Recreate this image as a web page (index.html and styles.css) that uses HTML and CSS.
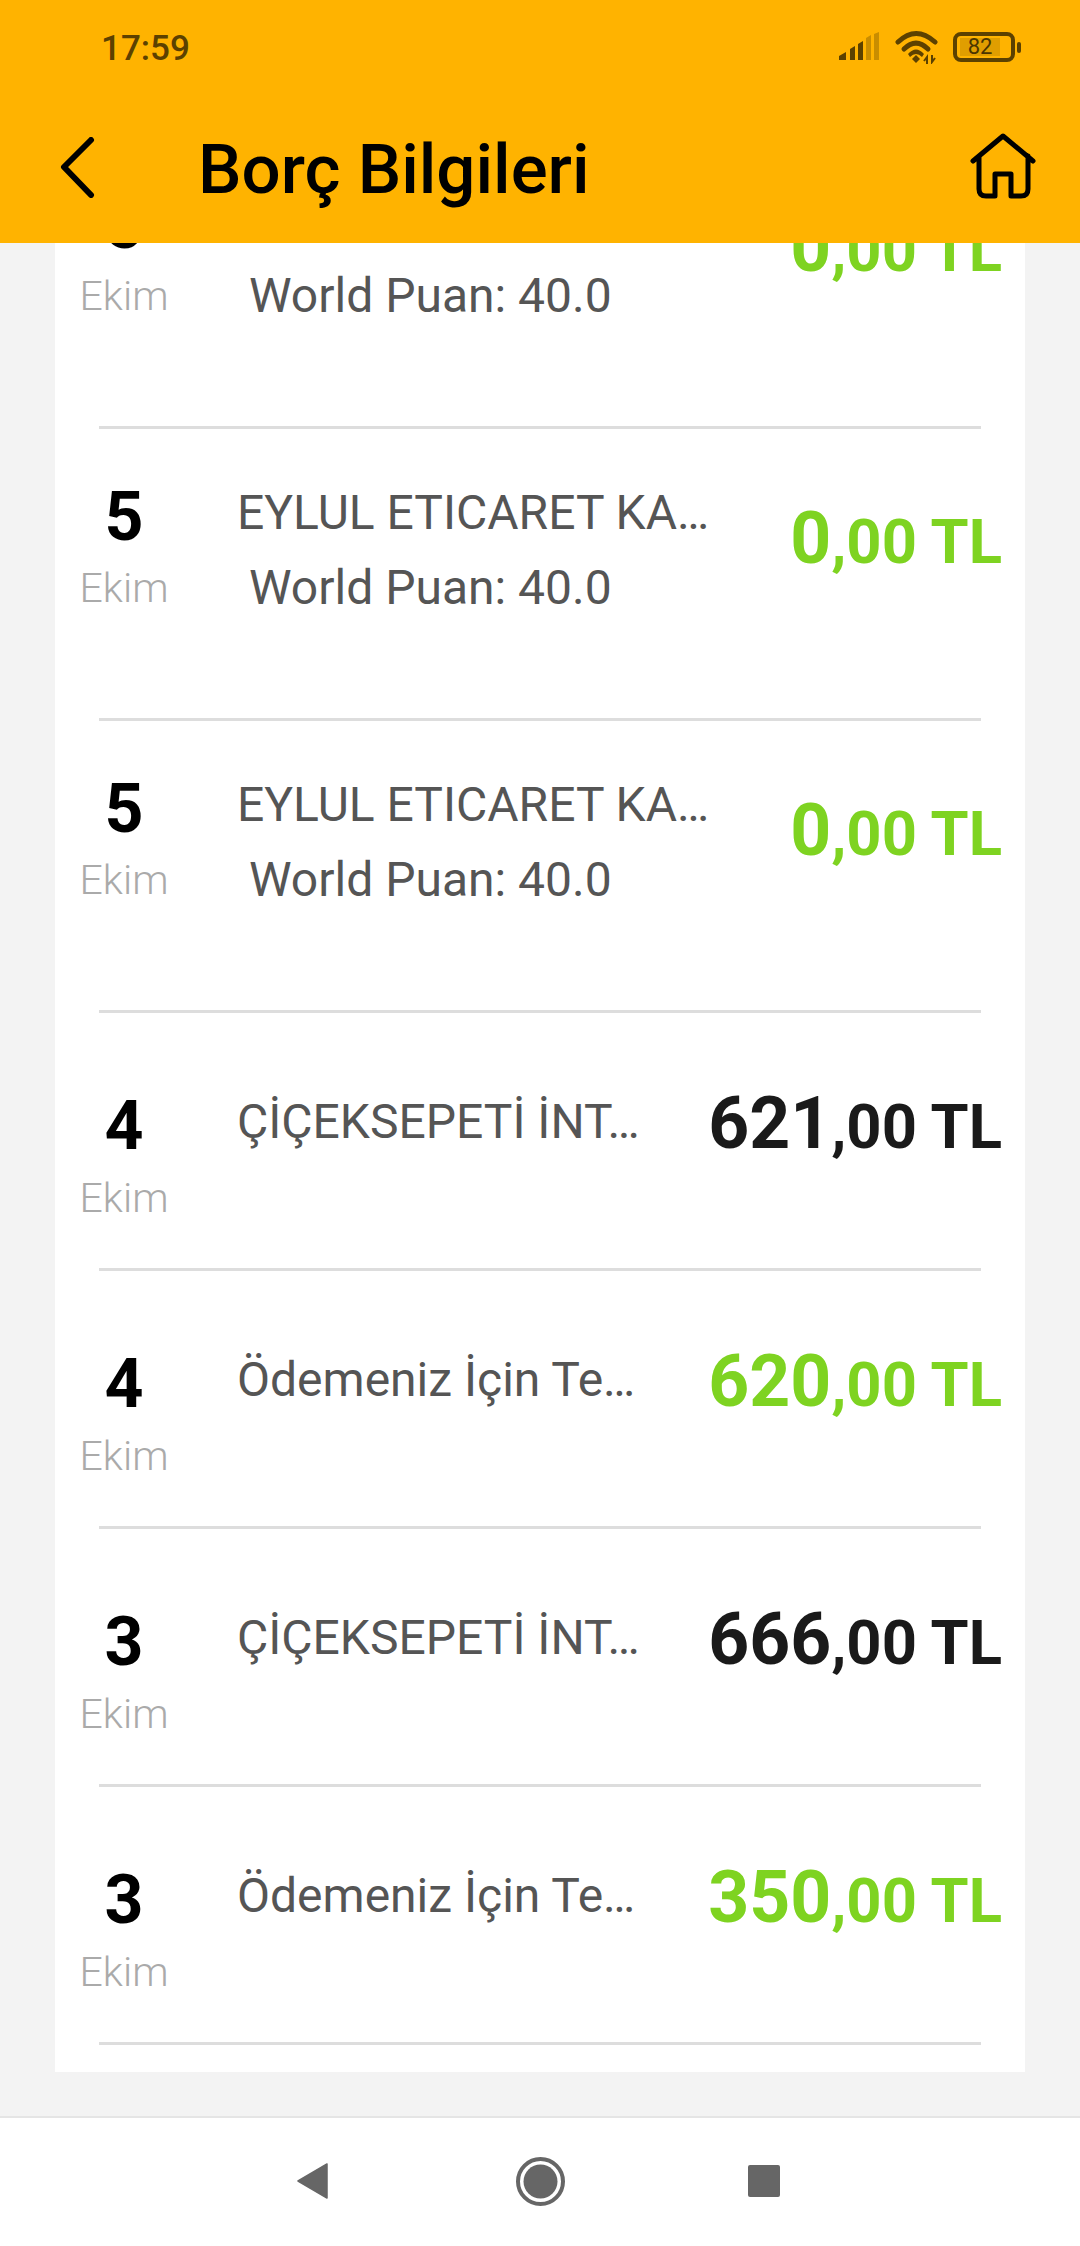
FILE: index.html
```html
<!DOCTYPE html>
<html>
<head>
  <title>Borç Bilgileri</title>
  <link rel="stylesheet" href="styles.css">
</head>
<body>
  <div class="header">
    <div class="status-bar">
      <span class="status-time">17:59</span>
      <div class="status-icons">
        <svg class="icon-signal" width="40" height="28" viewBox="0 0 40 28">
          <polygon points="0,28 0,24 7,20 7,28" fill="#5c4100"/>
          <polygon points="11,28 11,17 16,14 16,28" fill="#5c4100"/>
          <polygon points="19,28 19,12 24,9 24,28" fill="#5c4100"/>
          <polygon points="27,28 27,6 32,3 32,28" fill="#c98d00"/>
          <polygon points="35,28 35,2 40,0 40,28" fill="#c98d00"/>
        </svg>
        <svg class="icon-wifi" width="46" height="34" viewBox="0 0 46 34">
          <g fill="none" stroke="#5c4100" stroke-width="5" stroke-linecap="round">
            <path d="M3 12Q21 -5 40 12"/>
            <path d="M9 19Q21 7 33 19"/>
          </g>
          <path d="M13 24Q21 15 29 24L27 27Q21 21 15 27Z" fill="#5c4100"/>
          <path d="M21 25L25 29L21 33L17 29Z" fill="#5c4100"/>
          <path d="M32 34V27L29 31M37 25V32L40 28" fill="none" stroke="#5c4100" stroke-width="2"/>
        </svg>
        <div class="battery">
          <div class="battery-body"><span class="battery-level">82</span></div>
          <div class="battery-nub"></div>
        </div>
      </div>
    </div>
    <div class="toolbar">
      <svg class="icon-back" width="35" height="61" viewBox="0 0 35 61">
        <path d="M31 3L4 30L31 58" fill="none" stroke="#000" stroke-width="6" stroke-linecap="round" stroke-linejoin="round"/>
      </svg>
      <h1 class="page-title">Borç Bilgileri</h1>
      <svg class="icon-home" width="66" height="66" viewBox="0 0 66 66">
        <path d="M3 28L33 3L63 28M9 23V56Q9 63 16 63H25V41H41V63H51Q58 63 58 56V23" fill="none" stroke="#000" stroke-width="5" stroke-linecap="round" stroke-linejoin="round"/>
      </svg>
    </div>
  </div>

  <div class="content">
    <div class="card">
      <div class="row row-puan">
        <div class="date"><div class="day">5</div><div class="month">Ekim</div></div>
        <div class="info"><div class="name">EYLUL ETICARET KA…</div><div class="puan">World Puan: 40.0</div></div>
        <div class="amount green"><span class="whole">0</span>,00 TL</div>
      </div>
      <hr class="divider">
      <div class="row row-puan">
        <div class="date"><div class="day">5</div><div class="month">Ekim</div></div>
        <div class="info"><div class="name">EYLUL ETICARET KA…</div><div class="puan">World Puan: 40.0</div></div>
        <div class="amount green"><span class="whole">0</span>,00 TL</div>
      </div>
      <hr class="divider">
      <div class="row row-puan">
        <div class="date"><div class="day">5</div><div class="month">Ekim</div></div>
        <div class="info"><div class="name">EYLUL ETICARET KA…</div><div class="puan">World Puan: 40.0</div></div>
        <div class="amount green"><span class="whole">0</span>,00 TL</div>
      </div>
      <hr class="divider">
      <div class="row">
        <div class="date"><div class="day">4</div><div class="month">Ekim</div></div>
        <div class="info"><div class="name">ÇİÇEKSEPETİ İNT…</div></div>
        <div class="amount"><span class="whole">621</span>,00 TL</div>
      </div>
      <hr class="divider">
      <div class="row">
        <div class="date"><div class="day">4</div><div class="month">Ekim</div></div>
        <div class="info"><div class="name">Ödemeniz İçin Te…</div></div>
        <div class="amount green"><span class="whole">620</span>,00 TL</div>
      </div>
      <hr class="divider">
      <div class="row">
        <div class="date"><div class="day">3</div><div class="month">Ekim</div></div>
        <div class="info"><div class="name">ÇİÇEKSEPETİ İNT…</div></div>
        <div class="amount"><span class="whole">666</span>,00 TL</div>
      </div>
      <hr class="divider">
      <div class="row">
        <div class="date"><div class="day">3</div><div class="month">Ekim</div></div>
        <div class="info"><div class="name">Ödemeniz İçin Te…</div></div>
        <div class="amount green"><span class="whole">350</span>,00 TL</div>
      </div>
      <hr class="divider">
    </div>
  </div>

  <div class="nav-bar">
    <svg class="nav-back" width="31" height="36" viewBox="0 0 31 36">
      <path d="M30 1V35L1 18Z" fill="#666" stroke="#666" stroke-width="1.5" stroke-linejoin="round"/>
    </svg>
    <svg class="nav-home" width="49" height="49" viewBox="0 0 49 49">
      <circle cx="24.5" cy="24.5" r="22.5" fill="none" stroke="#666" stroke-width="4"/>
      <circle cx="24.5" cy="24.5" r="17" fill="#666"/>
    </svg>
    <div class="nav-recent"></div>
  </div>
</body>
</html>
```

FILE: styles.css
```css
* {
  box-sizing: border-box;
}

body {
  font-family: Roboto, sans-serif;
  margin: 0;
  height: 2246px;
  overflow: hidden;
  display: flex;
  flex-direction: column;
  background-color: #f3f3f3;
}

.header {
  height: 243px;
  background-color: #ffb300;
  flex-shrink: 0;
  position: relative;
  z-index: 1;
}

.status-bar {
  height: 94px;
  padding: 31px 59px 0 101px;
  display: flex;
  justify-content: space-between;
  align-items: flex-start;
}

.status-time {
  font-size: 35px;
  line-height: 36px;
  font-weight: 500;
  color: #5c4100;
}

.status-icons {
  display: flex;
  align-items: flex-start;
  margin-top: 1px;
}

.icon-wifi {
  margin-left: 16px;
  margin-top: -2px;
}

.battery {
  display: flex;
  align-items: center;
  margin-left: 12px;
}

.battery-body {
  width: 62px;
  height: 30px;
  border: 4px solid #5c4100;
  border-radius: 8px;
  padding: 2px 11px 2px 3px;
  display: flex;
}

.battery-level {
  flex: 1;
  background-color: #e09e00;
  color: #4a3500;
  font-size: 22px;
  line-height: 18px;
  text-align: center;
}

.battery-nub {
  width: 4px;
  height: 11px;
  margin-left: 2px;
  border-radius: 2px;
  background-color: #5c4100;
}

.toolbar {
  display: flex;
  align-items: flex-start;
  padding-left: 60px;
  position: relative;
}

.icon-back {
  margin-top: 43px;
}

.page-title {
  margin: 36px 0 0 103px;
  font-size: 69px;
  line-height: 80px;
  font-weight: 500;
  color: #000;
}

.icon-home {
  margin: 39px 0 0 auto;
  margin-right: 44px;
}

.content {
  flex: 1;
  overflow: hidden;
}

.card {
  margin: -106px 55px 0;
  padding-bottom: 27px;
  background-color: #fff;
}

.row {
  height: 255px;
  padding: 79px 23px 0 0;
  display: flex;
  align-items: flex-start;
}

.row-puan {
  height: 289px;
  padding-top: 54px;
}

.date {
  width: 138px;
  flex-shrink: 0;
  text-align: center;
}

.day {
  font-size: 68px;
  line-height: 68px;
  font-weight: 700;
  color: #000;
}

.month {
  margin-top: 17px;
  font-size: 41px;
  line-height: 42px;
  font-weight: 300;
  color: #aaa;
}

.row-puan .month {
  margin-top: 16px;
}

.info {
  margin-left: 44px;
  margin-top: 6px;
  flex: 1;
}

.name {
  font-size: 48px;
  line-height: 48px;
  color: #555;
  white-space: nowrap;
}

.puan {
  margin: 27px 0 0 12px;
  font-size: 48px;
  line-height: 48px;
  color: #555;
}

.amount {
  margin-top: -4px;
  font-size: 61.5px;
  line-height: 72px;
  font-weight: 700;
  color: #1a1a1a;
  white-space: nowrap;
}

.row-puan .amount {
  margin-top: 20px;
}

.amount .whole {
  font-size: 71.5px;
}

.green {
  color: #7ed321;
}

.divider {
  height: 3px;
  margin: 0 44px;
  border: none;
  background-color: #ddd;
}

.nav-bar {
  height: 130px;
  flex-shrink: 0;
  padding: 39px 0 0 297px;
  display: flex;
  align-items: flex-start;
  background-color: #fff;
  border-top: 2px solid #e5e5e5;
}

.nav-back {
  margin-top: 6px;
}

.nav-home {
  margin-left: 188px;
}

.nav-recent {
  width: 32px;
  height: 32px;
  margin: 8px 0 0 183px;
  border-radius: 2px;
  background-color: #666;
}
```
